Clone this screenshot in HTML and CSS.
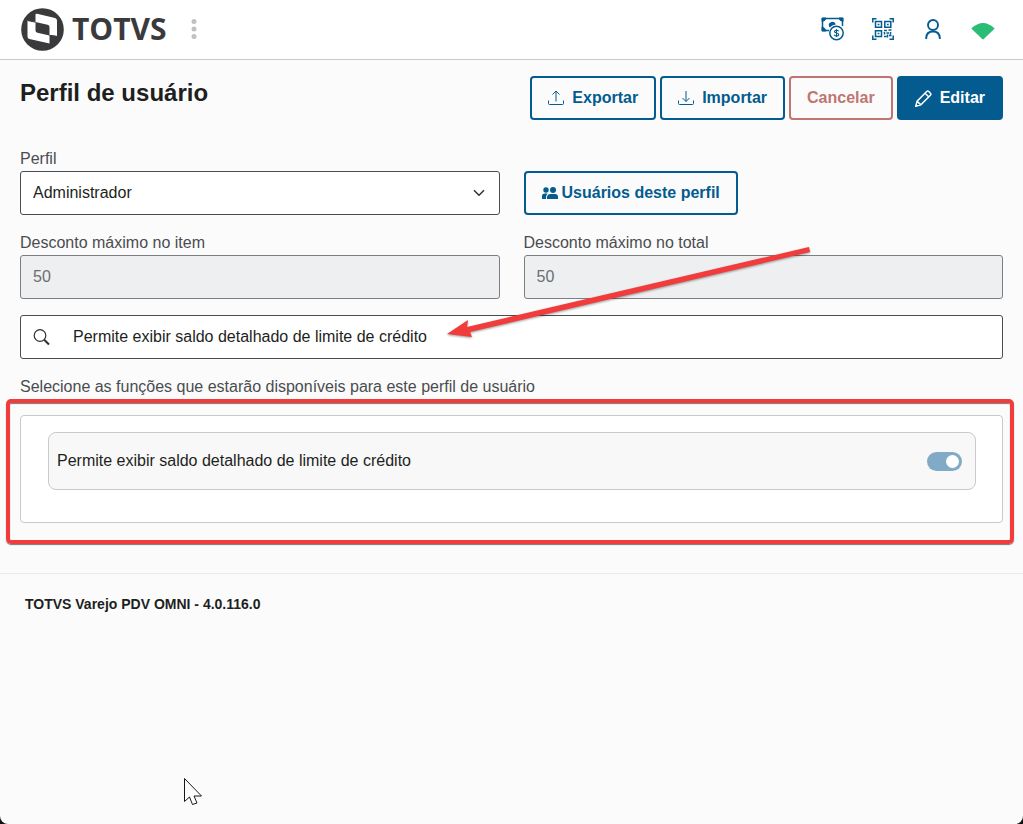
FILE: index.html
```html
<!DOCTYPE html>
<html lang="pt-BR">
<head>
    <meta charset="UTF-8">
    <meta name="viewport" content="width=device-width, initial-scale=1.0">
    <title>Perfil de usuário</title>
    <link rel="stylesheet" href="styles.css">
</head>
<body>
    <header class="topbar">
        <a class="logo" href="#">
            <svg width="44" height="44" viewBox="0 0 44 44" aria-hidden="true">
                <circle cx="22.500" cy="22.500" r="21.300" fill="#3a3a3c"/>
                <path d="M15.500 7.500Q15.500 6.500 17 6.800L35 11Q37 11.500 37 13.500V29L29.500 28V36.500L9.500 32Q7.500 31.500 7.500 29.500V13.500L15.500 15Z" fill="#fff"/>
                <path d="M15.500 15 27.500 17.700Q29.500 18.200 29.500 20V28.500L17.500 25.700Q15.500 25.200 15.500 23.500Z" fill="#3a3a3c"/>
                <path d="M7.500 13.500 15.500 15.200M29.500 28.300 37 29.500" stroke="#3a3a3c"/>
            </svg>
            <span>TOTVS</span>
        </a>
        <button class="icon-btn menu-btn" type="button" aria-label="Menu">
            <svg width="6" height="20" viewBox="0 0 6 20" fill="#bfc1c3">
                <circle cx="3" cy="2.500" r="2.500"/>
                <circle cx="3" cy="10" r="2.500"/>
                <circle cx="3" cy="17.500" r="2.500"/>
            </svg>
        </button>
        <nav class="shortcuts">
            <button class="icon-btn" type="button" aria-label="Caixa">
                <svg width="24" height="24" viewBox="0 0 24 24">
                    <path d="M1.500 1.500H21.500V9M8 13.500H1.500V1" fill="none" stroke="#045b8f" stroke-width="1.500"/>
                    <path d="M1 1H5Q4.500 4 1 4.500ZM22 1H18Q18.500 4 22 4.500ZM1 14V10Q4 10.500 5 14Z" fill="#045b8f" stroke="#045b8f"/>
                    <path d="M8 9.500A3.500 3.500 0 1 1 14.800 7.500Q10.500 8 9 10.500Z" fill="#045b8f"/>
                    <circle cx="15.500" cy="16" r="6.700" fill="#fff" stroke="#045b8f" stroke-width="1.500"/>
                    <path d="M17.700 14.200Q17 13.200 15.500 13.200 13.500 13.200 13.500 14.600 13.500 15.800 15.500 16 17.700 16.300 17.700 17.500 17.700 19 15.500 19 13.800 19 13.200 17.800M15.500 12V20" fill="none" stroke="#045b8f" stroke-width="1.100"/>
                </svg>
            </button>
            <button class="icon-btn" type="button" aria-label="QR Code">
                <svg width="24" height="24" viewBox="0 0 24 24" fill="none" stroke="#045b8f" stroke-width="1.500">
                    <path d="M1.800 5.500V1.800H5.500M18.500 1.800H22.200V5.500M1.800 18.500V22.200H5.500M18.500 22.200H22.200V18.500"/>
                    <path d="M4.500 4.500H10.500V10.200H4.500ZM13.800 4.500H19.800V10.200H13.800ZM4.500 13.800H10.500V19.500H4.500Z"/>
                    <path d="M6.700 7.500H8.400M15.900 7.500H17.700M6.700 16.500H8.400M13 13.500H16M17.500 13H20.500M13.500 15V17.500M15.500 16H18M19.500 15V17.500M13 19.500H15.500M16.500 17.500V20.500M18 18.500H20.500"/>
                </svg>
            </button>
            <button class="icon-btn" type="button" aria-label="Usuário">
                <svg width="24" height="24" viewBox="0 0 24 24" fill="none" stroke="#045b8f" stroke-width="1.900">
                    <circle cx="12" cy="8" r="5"/>
                    <path d="M5.200 22V21Q5.500 14.500 12 14.500T18.800 21V22"/>
                </svg>
            </button>
            <button class="icon-btn" type="button" aria-label="Conectado">
                <svg width="24" height="24" viewBox="0 0 24 24" fill="#2bbd75">
                    <path d="M0.300 11.500Q12 0.500 23.700 11.500L12.800 22Q12 22.800 11.200 22Z"/>
                </svg>
            </button>
        </nav>
    </header>

    <main class="page">
        <div class="page-header">
            <h1>Perfil de usuário</h1>
            <div class="actions">
                <button class="btn" type="button">
                    <svg width="16" height="16" viewBox="0 0 16 16"><path d="M.5 10.500V13.500Q.5 14.500 1.500 14.500H14.500Q15.500 14.500 15.500 13.500V10.500M8 11.500V1.500M4.500 4.500 8 1 11.500 4.500"/></svg>
                    Exportar
                </button>
                <button class="btn" type="button">
                    <svg width="16" height="16" viewBox="0 0 16 16"><path d="M.5 10.500V13.500Q.5 14.500 1.500 14.500H14.500Q15.500 14.500 15.500 13.500V10.500M8 1V11.500M4.500 8 8 11.500 11.500 8"/></svg>
                    Importar
                </button>
                <button class="btn btn-danger" type="button">Cancelar</button>
                <button class="btn btn-primary" type="button">
                    <svg width="17" height="17" viewBox="0 0 16 16"><path d="M.7 15.300 2 10.500 11 1.500Q12 .5 13 1.500L14.500 3Q15.500 4 14.500 5L5.500 14ZM2 10.500 5.500 14M9.500 3 13 6.500"/></svg>
                    Editar
                </button>
            </div>
        </div>

        <form class="form">
            <div class="field">
                <label for="perfil">Perfil</label>
                <div class="select-box">
                    <select id="perfil" name="perfil">
                        <option>Administrador</option>
                    </select>
                    <svg width="12" height="8" viewBox="0 0 12 8" aria-hidden="true"><path d="M1 1.200 6 6.200 11 1.200" fill="none" stroke="#2c3036" stroke-width="1.500"/></svg>
                </div>
            </div>
            <button class="btn btn-users" type="button">
                <svg width="16" height="12" viewBox="0 0 16 12">
                    <circle cx="4" cy="3" r="2.700"/>
                    <circle cx="11" cy="3" r="3"/>
                    <path d="M0 12V9Q0 6.500 3 6.500H5.500Q4 8 4 12ZM5 12V10Q5.500 7 8.500 7H13Q16 7 16 10V12Z"/>
                </svg>
                Usuários deste perfil
            </button>
            <div class="field">
                <label for="desc-item">Desconto máximo no item</label>
                <input type="text" id="desc-item" value="50" disabled>
            </div>
            <div class="field">
                <label for="desc-total">Desconto máximo no total</label>
                <input type="text" id="desc-total" value="50" disabled>
            </div>
            <div class="search">
                <svg width="18" height="18" viewBox="0 0 18 18" aria-hidden="true">
                    <circle cx="7" cy="7.500" r="5.800" fill="none" stroke="#2c3036" stroke-width="1.200"/>
                    <path d="M11.200 11.700 16 16.500" stroke="#2c3036" stroke-width="2"/>
                </svg>
                <input type="text" id="busca" value="Permite exibir saldo detalhado de limite de crédito" aria-label="Pesquisar funções">
                <svg class="arrow" width="364" height="92" viewBox="0 0 364 92" aria-hidden="true">
                    <path d="M362 1 363 6 23 86 25 91 0 88 21 74 20 81Z" fill="#f23b3b"/>
                </svg>
            </div>
        </form>

        <p class="hint">Selecione as funções que estarão disponíveis para este perfil de usuário</p>
        <section class="panel">
            <div class="permission">
                <label for="saldo">Permite exibir saldo detalhado de limite de crédito</label>
                <input class="switch" type="checkbox" id="saldo" checked disabled>
            </div>
        </section>
    </main>

    <footer class="footer">TOTVS Varejo PDV OMNI - 4.0.116.0</footer>

    <svg class="cursor" width="19" height="28" viewBox="0 0 19 28" aria-hidden="true">
        <path d="M.5.500V23.500L5.500 19 8.500 26.500 13 25 10 18H17.500Z" fill="#fff" stroke="#16161f"/>
    </svg>
</body>
</html>
```
FILE: styles.css
```css
:root {
    --primary: #045b8f;
    --danger: #c07571;
    --red: #f23b3b;
    --text: #1d1f21;
    --label: #4a4d50;
    --line: #c8c9cb;
    --page-bg: #fbfbfb;
}

* {
    box-sizing: border-box;
}

html {
    background-color: #111;
}

body {
    margin: 0;
    min-height: 100vh;
    position: relative;
    border-radius: 0 0 8px 8px;
    background-color: var(--page-bg);
    color: var(--text);
    font-family: "Liberation Sans", Arial, sans-serif;
    font-size: 16px;
    line-height: 24px;
}

button, input, select {
    font: inherit;
    color: inherit;
}

.topbar {
    display: flex;
    align-items: center;
    height: 60px;
    padding: 0 28px 2px 20px;
    background-color: #fff;
    border-bottom: 1px solid var(--line);
}

.logo {
    display: flex;
    align-items: center;
    gap: 8px;
    color: #3a3a3c;
    font-family: "Open Sans", sans-serif;
    font-size: 30px;
    font-weight: 700;
    text-decoration: none;
}

.icon-btn {
    display: flex;
    padding: 0;
    border: none;
    background: none;
    cursor: pointer;
}

.menu-btn {
    margin-left: 24px;
}

.shortcuts {
    display: flex;
    gap: 26px;
    margin-left: auto;
}

.page {
    padding: 16px 20px 50px;
}

.page-header {
    display: flex;
    justify-content: space-between;
    margin-bottom: 27px;
}

h1 {
    margin: 0;
    font-size: 24px;
    line-height: 34px;
}

.actions {
    display: flex;
    gap: 4px;
}

.btn {
    display: flex;
    align-items: center;
    gap: 8px;
    height: 44px;
    padding: 0 16px;
    border: 2px solid var(--primary);
    border-radius: 4px;
    background-color: transparent;
    color: var(--primary);
    font-weight: bold;
    cursor: pointer;
}

.btn svg {
    fill: none;
    stroke: currentColor;
}

.btn-danger {
    border-color: var(--danger);
    color: var(--danger);
}

.btn-primary {
    background-color: var(--primary);
    color: #fff;
}

.btn-primary svg {
    stroke-width: 1.4;
}

.btn-users {
    gap: 4px;
    justify-self: start;
    align-self: end;
}

.btn-users svg {
    fill: currentColor;
    stroke: none;
}

.form {
    display: grid;
    grid-template-columns: 1fr 1fr;
    gap: 16px 24px;
}

.field {
    display: flex;
    flex-direction: column;
}

.field label {
    color: var(--label);
    line-height: 24px;
}

.field input, .select-box, .search {
    height: 44px;
    border: 1px solid #4a4d50;
    border-radius: 3px;
    background-color: #fff;
}

.field input {
    width: 100%;
    padding: 0 12px;
    border-color: #7c7f82;
    background-color: #eeeff1;
    color: #6b6e72;
}

.select-box, .search {
    display: flex;
    align-items: center;
}

.select-box {
    padding-right: 14px;
}

.select-box select {
    flex: 1;
    height: 100%;
    padding: 0 12px;
    border: none;
    background: none;
    appearance: none;
}

.search {
    grid-column: 1 / -1;
    position: relative;
    gap: 22px;
    padding: 0 12px;
}

.search input {
    flex: 1;
    padding: 0;
    border: none;
    outline: none;
    background: none;
}

.arrow {
    position: absolute;
    left: 426px;
    bottom: 20px;
    filter: drop-shadow(0 1px 1px rgba(0, 0, 0, 0.4));
}

.hint {
    margin: 16px 0;
    color: var(--label);
}

.panel {
    position: relative;
    padding: 16px 26px 32px 27px;
    border: 1px solid var(--line);
    border-radius: 4px;
    background-color: #fff;
}

/* destaque em volta das funções */
.panel::after {
    content: "";
    position: absolute;
    inset: -17px -12px -22px -15px;
    border: 4px solid var(--red);
    border-radius: 5px;
    box-shadow: 0 1px 1px #777, inset 0 1px 1px #777;
    pointer-events: none;
}

.permission {
    display: flex;
    align-items: center;
    justify-content: space-between;
    height: 58px;
    padding: 0 13px 0 8px;
    border: 1px solid var(--line);
    border-radius: 8px;
    background-color: #f8f8f8;
}

.switch {
    appearance: none;
    width: 35px;
    height: 19px;
    margin: 0;
    padding: 3px;
    border-radius: 10px;
    background-color: #a9acae;
}

.switch::before {
    content: "";
    display: block;
    width: 13px;
    height: 13px;
    border-radius: 50%;
    background-color: #fff;
}

.switch:checked {
    background-color: #80aac5;
}

.switch:checked::before {
    margin-left: auto;
}

.footer {
    padding: 18px 25px;
    border-top: 1px solid #ebebec;
    font-size: 14px;
    font-weight: bold;
}

.cursor {
    position: absolute;
    left: 184px;
    top: 778px;
}
```
